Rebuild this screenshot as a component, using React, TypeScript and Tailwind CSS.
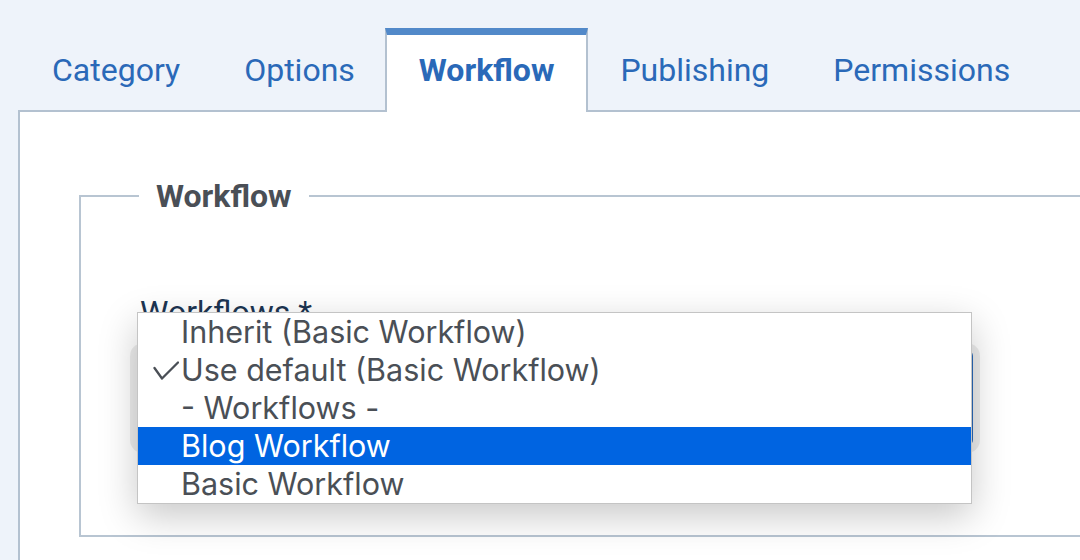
import React from "react";

const tabs = ["Category", "Options", "Workflow", "Publishing", "Permissions"];

const options = [
  { label: "Inherit (Basic Workflow)", checked: false, active: false },
  { label: "Use default (Basic Workflow)", checked: true, active: false },
  { label: "- Workflows -", checked: false, active: false },
  { label: "Blog Workflow", checked: false, active: true },
  { label: "Basic Workflow", checked: false, active: false },
];

function Check() {
  return (
    <svg width="26" height="19" viewBox="0 0 26 19" fill="none">
      <polyline
        points="1.5,7 9,17.5 25,1.5"
        stroke="#4a4f56"
        strokeWidth="2.3"
        strokeLinecap="round"
        strokeLinejoin="round"
      />
    </svg>
  );
}

export default function App() {
  return (
    <div className="w-[1080px] h-[560px] overflow-hidden bg-[#eef3fa] flex flex-col font-['Roboto',sans-serif]">
      {/* tab strip */}
      <div className="flex pt-[28px] pl-[20px] h-[112px] shrink-0">
        {tabs.map((tab) => {
          const active = tab === "Workflow";
          return (
            <div
              key={tab}
              className={
                active
                  ? "relative z-10 -ml-[2px] h-[84px] px-[32px] flex items-center bg-white border-x-2 border-[#b3c1d0] border-t-[7px] border-t-[#5289c9] text-[32px] font-bold text-[#2a69b8] pb-[7px]"
                  : "h-[82px] px-[32px] flex items-center text-[32px] text-[#2a69b8] pt-[1px]"
              }
            >
              {tab}
            </div>
          );
        })}
      </div>

      {/* tab panel */}
      <div className="ml-[18px] -mt-[2px] flex-1 bg-white border-l-2 border-t-2 border-[#b3c1d0] pl-[59px] pt-[68px]">
        <fieldset className="w-[1100px] border-2 border-[#b8c5d2] pl-[56px] pb-[89px] pt-0 m-0">
          <legend className="ml-[2px] px-[17px] text-[32px] leading-[32px] font-bold text-[#4a4f56]">
            Workflow
          </legend>
          <div className="relative w-[836px] pt-[83px]">
            <div className="pl-[3px] text-[32px] leading-[34px] text-[#1c3552]">
              Workflows *
            </div>
            <div className="mt-[21px] h-[96px] rounded-[6px] border-2 border-[#2a69b8] bg-white shadow-[0_0_0_7px_rgba(0,0,0,0.07)]" />

            {/* open native menu */}
            <div className="absolute left-0 top-[100px] w-[835px] bg-white border border-[#c4c4c4] shadow-[0_12px_36px_rgba(0,0,0,0.22)] font-['Inter',sans-serif]">
              {options.map((o) => (
                <div
                  key={o.label}
                  className={
                    o.active
                      ? "h-[38px] flex items-center bg-[#0064e1] text-white"
                      : "h-[38px] flex items-center text-[#4a4f56]"
                  }
                >
                  <div className="w-[43px] flex justify-end pr-[2px]">
                    {o.checked && <Check />}
                  </div>
                  <span className="text-[30.5px] leading-[38px]">{o.label}</span>
                </div>
              ))}
            </div>
          </div>
        </fieldset>
      </div>
    </div>
  );
}
